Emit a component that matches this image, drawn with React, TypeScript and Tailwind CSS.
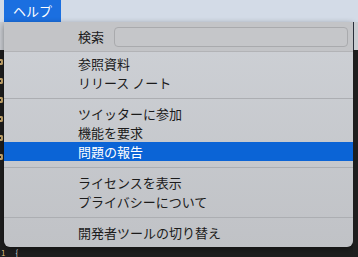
import React from 'react';

const Separator = () => (
  <div className="h-[12px] flex items-center">
    <div className="h-px w-full bg-[#acaeb2]" />
  </div>
);

const Item = ({ label, active }: { label: string; active?: boolean }) => (
  <div
    className={`h-[19px] flex items-center pl-[74px] text-[13px] leading-none ${
      active ? 'bg-[#0b64d6] text-white' : 'text-[#1b1b1b]'
    }`}
  >
    {label}
  </div>
);

// clipped code glyphs peeking out from behind the menu
const Glyph = () => <div className="w-[3px] h-[6px] rounded-r-[2px] border-2 border-l-0 border-[#c8a96e]" />;

const App = () => {
  return (
    <div
      className="w-[358px] h-[257px] bg-[#1e1e1e] overflow-hidden flex flex-col"
      style={{ fontFamily: '"Noto Sans CJK JP", "Noto Sans", sans-serif' }}
    >
      {/* menu bar */}
      <div className="h-[22px] shrink-0 bg-[#d3dbe7] flex">
        <div className="ml-[4px] w-[57px] bg-[#1b6fe0] text-white text-[13px] flex items-center pl-[9px]">
          ヘルプ
        </div>
      </div>

      <div className="flex flex-1 min-h-0">
        {/* editor behind, left */}
        <div className="w-[4px] shrink-0 flex flex-col">
          <div className="h-[28px] bg-[#c9ccd1]" />
          <div className="flex-1 bg-[#1e1e1e] flex flex-col pt-[9px] gap-[13px] overflow-hidden">
            <Glyph />
            <Glyph />
            <Glyph />
            <Glyph />
            <Glyph />
            <Glyph />
          </div>
        </div>

        {/* dropdown */}
        <div className="w-[349px] h-[225px] shrink-0 rounded-b-[6px] overflow-hidden bg-gradient-to-b from-[#ced1d6] to-[#c0c2c6] flex flex-col shadow-[0_2px_6px_rgba(0,0,0,0.4)]">
          <div className="h-[30px] bg-[#c3c4c7] flex items-center border-b border-[#b2b3b6]">
            <span className="pl-[74px] w-[110px] text-[13px] text-[#1b1b1b] leading-none">検索</span>
            <div className="flex-1 mr-[5px] h-[20px] rounded-[4px] border border-[#a9aaad] bg-[#c5c6c9]" />
          </div>
          <div className="h-[2px]" />
          <Item label="参照資料" />
          <Item label="リリース ノート" />
          <Separator />
          <Item label="ツイッターに参加" />
          <Item label="機能を要求" />
          <Item label="問題の報告" active />
          <Separator />
          <Item label="ライセンスを表示" />
          <Item label="プライバシーについて" />
          <Separator />
          <Item label="開発者ツールの切り替え" />
        </div>

        {/* editor behind, right */}
        <div className="flex-1 flex flex-col">
          <div className="h-[28px] bg-[#c9ccd1] border-l border-[#2a2f3a]" />
          <div className="flex-1 bg-[#1e1e1e]" />
        </div>
      </div>

      <div className="h-[9px] shrink-0 flex items-start gap-[10px] text-[8px] leading-[9px] -mt-[9px] pl-[1px]">
        <span className="text-[#d7ba7d]">1</span>
        <span className="text-[#d4d4d4]">{'{'}</span>
      </div>
    </div>
  );
};

export default App;
